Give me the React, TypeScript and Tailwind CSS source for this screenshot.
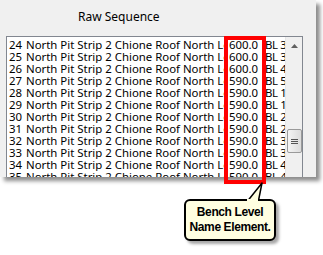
import React from 'react';

const rows = [
  { n: '24', v: '600.0', bl: 'BL 30' },
  { n: '25', v: '600.0', bl: 'BL 35' },
  { n: '26', v: '600.0', bl: 'BL 40' },
  { n: '27', v: '590.0', bl: 'BL 50' },
  { n: '28', v: '590.0', bl: 'BL 10' },
  { n: '29', v: '590.0', bl: 'BL 15' },
  { n: '30', v: '590.0', bl: 'BL 20' },
  { n: '31', v: '590.0', bl: 'BL 25' },
  { n: '32', v: '590.0', bl: 'BL 30' },
  { n: '33', v: '590.0', bl: 'BL 35' },
  { n: '34', v: '590.0', bl: 'BL 40' },
  { n: '35', v: '590.0', bl: 'BL 45' },
];

export default function App() {
  return (
    <div
      className="relative w-[323px] h-[255px] bg-white overflow-hidden"
      style={{ fontFamily: '"Noto Sans", "Liberation Sans", sans-serif' }}
    >
      {/* window fragment */}
      <div className="w-[316px] h-[177px] bg-[#f0f0f0] overflow-hidden shadow-[4px_4px_4px_rgba(0,0,0,0.45)]">
        <div className="pl-[78px] pt-[9px] h-[36px] text-[12px] leading-[16px] text-black">Raw Sequence</div>
        <div className="ml-[6px] w-[297px] h-[160px] bg-white border border-[#828790] flex">
          <div className="flex-1 overflow-hidden pt-[2px]">
            {rows.map((r) => (
              <div key={r.n} className="flex h-[12px] text-[11.4px] leading-[12px] text-black whitespace-nowrap">
                <span className="w-[19px] pl-[2px]">{r.n}</span>
                <span className="w-[200px] overflow-hidden">North Pit Strip 2 Chione Roof North Loop</span>
                <span className="w-[39px] pl-[3px]">{r.v}</span>
                <span className="flex-1 overflow-hidden tracking-[-0.4px]">{r.bl}</span>
              </div>
            ))}
          </div>
          {/* scrollbar */}
          <div className="w-[17px] bg-[#f0f0f0] border-l border-[#e6e6e6] flex flex-col items-center">
            <div className="h-[17px] w-full flex items-center justify-center">
              <svg width="7" height="4" viewBox="0 0 7 4">
                <path d="M0 4 L3.5 0 L7 4 Z" fill="#606060" />
              </svg>
            </div>
            <div className="mt-[75px] w-[15px] h-[24px] rounded-[2px] border border-[#9a9a9a] bg-gradient-to-r from-[#f4f4f4] to-[#dcdcdc] flex flex-col items-center justify-center gap-[1px]">
              <div className="w-[7px] h-[1px] bg-[#555]" />
              <div className="w-[7px] h-[1px] bg-[#555]" />
              <div className="w-[7px] h-[1px] bg-[#555]" />
            </div>
          </div>
        </div>
      </div>

      {/* red highlight */}
      <div className="absolute left-[224px] top-[36px] w-[42px] h-[148px] border-[4px] border-[#ff0000]" />

      {/* callout pointer */}
      <svg className="absolute left-[240px] top-[182px]" width="30" height="22" viewBox="0 0 30 22">
        <path d="M6 21 L22 1 L18 21 Z" fill="#ffffe1" stroke="#000" strokeWidth="1.5" strokeLinejoin="round" />
      </svg>

      {/* callout */}
      <div
        className="absolute left-[184px] top-[199px] w-[92px] h-[42px] bg-[#ffffe1] border-2 border-black rounded-[6px] shadow-[3px_3px_3px_rgba(0,0,0,0.35)] flex flex-col items-center justify-center text-[12px] leading-[15px] font-bold text-black whitespace-nowrap tracking-[-0.4px]"
        style={{ fontFamily: '"Liberation Sans", Arial, sans-serif' }}
      >
        <span>Bench Level</span>
        <span>Name Element.</span>
      </div>
      {/* pointer join cover */}
      <div className="absolute left-[247px] top-[199px] w-[11px] h-[3px] bg-[#ffffe1]" />
    </div>
  );
}
